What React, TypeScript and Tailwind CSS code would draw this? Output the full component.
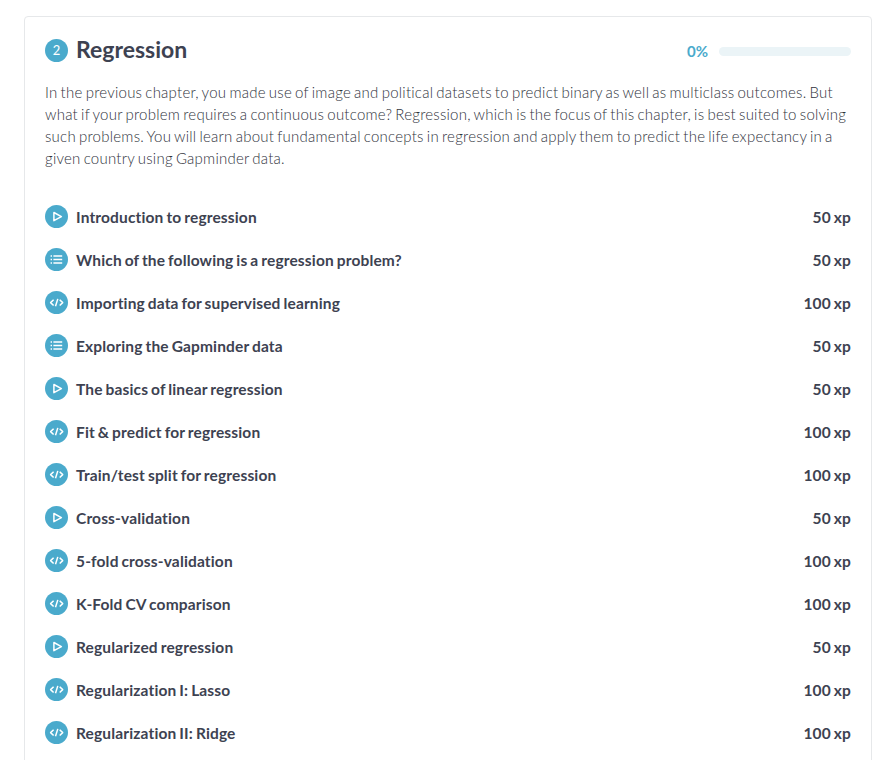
import React from "react";

type Kind = "video" | "list" | "code";

const items: [Kind, string, number][] = [
  ["video", "Introduction to regression", 50],
  ["list", "Which of the following is a regression problem?", 50],
  ["code", "Importing data for supervised learning", 100],
  ["list", "Exploring the Gapminder data", 50],
  ["video", "The basics of linear regression", 50],
  ["code", "Fit & predict for regression", 100],
  ["code", "Train/test split for regression", 100],
  ["video", "Cross-validation", 50],
  ["code", "5-fold cross-validation", 100],
  ["code", "K-Fold CV comparison", 100],
  ["video", "Regularized regression", 50],
  ["code", "Regularization I: Lasso", 100],
  ["code", "Regularization II: Ridge", 100],
];

function KindIcon({ kind }: { kind: Kind }) {
  return (
    <svg viewBox="0 0 23 23" className="size-[23px] shrink-0" fill="none" stroke="white" strokeWidth="1.4" strokeLinejoin="round">
      <circle cx="11.5" cy="11.5" r="11.5" fill="#4aaacc" stroke="none" />
      {kind === "video" && <path strokeWidth="1.5" d="M8.9 7.5v8.2l7.5-4.1z" />}
      {kind === "list" && <path d="M8.4 8h8.8M8.4 11.5h8.8M8.4 15h8.8M5.6 8h1.4M5.6 11.5h1.4M5.6 15h1.4" />}
      {kind === "code" && <path strokeWidth="1.5" d="M8.6 8.7l-3 2.9 3 2.9M14.7 8.7l3 2.9-3 2.9M12.8 7.9l-2.3 7.4" />}
    </svg>
  );
}

export default function App() {
  return (
    <div className="h-[760px] overflow-hidden bg-white pt-4 pl-6 font-['Lato',sans-serif] text-[#3d4251] [font-variant-ligatures:none]">
      <section className="h-[800px] w-[848px] rounded border border-[#e6e8ea] px-5 pt-5">
        <header className="flex h-[26px] items-center">
          <span className="flex size-[23px] items-center justify-center rounded-full bg-[#4aaacc] pt-px text-[13px] text-white">2</span>
          <h2 className="mb-0.5 ml-2 text-[23px] font-bold">Regression</h2>
          <span className="mt-0.5 ml-auto text-[15px] font-bold text-[#4aaacc]">0%</span>
          <div className="mt-0.5 ml-[11px] h-[9px] w-[132px] rounded-full bg-[#ebf4f7]" />
        </header>
        <p className="mt-[18px] text-[15px] leading-[22px] font-light tracking-[0.235px] [word-spacing:-1.2px] whitespace-nowrap text-[#30333d]">
          In the previous chapter, you made use of image and political datasets to predict binary as well as multiclass outcomes. But<br />
          what if your problem requires a continuous outcome? Regression, which is the focus of this chapter, is best suited to solving<br />
          such problems. You will learn about fundamental concepts in regression and apply them to predict the life expectancy in a<br />
          given country using Gapminder data.
        </p>
        <ul className="mt-[26px]">
          {items.map(([kind, title, xp]) => (
            <li key={title} className="flex h-[43px] items-center text-[15.5px] font-bold tracking-[0.15px] [word-spacing:-1px]">
              <KindIcon kind={kind} />
              <span className="mt-0.5 ml-2">{title}</span>
              <span className="mt-0.5 ml-auto">{xp} xp</span>
            </li>
          ))}
        </ul>
      </section>
    </div>
  );
}
